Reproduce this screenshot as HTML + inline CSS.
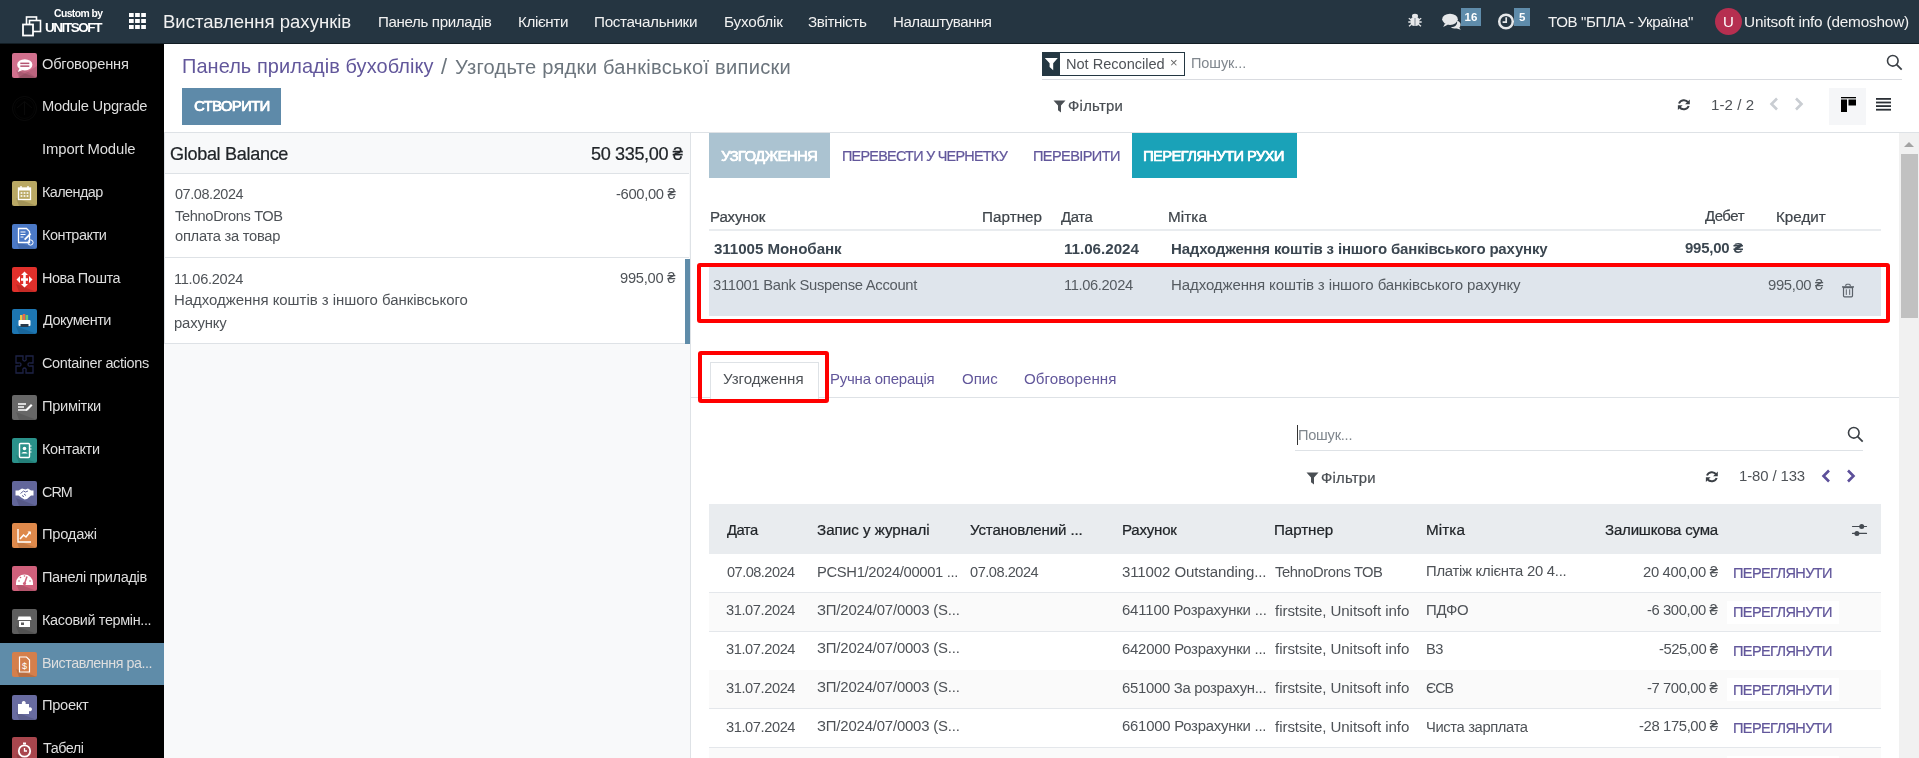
<!DOCTYPE html>
<html><head><meta charset="utf-8"><title>Odoo</title>
<style>
html,body{margin:0;padding:0;}
body{width:1919px;height:758px;overflow:hidden;position:relative;background:#fff;font-family:"Liberation Sans",sans-serif;}
.r{position:absolute;box-sizing:content-box;}
.t{position:absolute;line-height:1;white-space:pre;will-change:transform;}
svg.r{overflow:visible}
</style></head><body>
<div class="r" style="left:0px;top:0px;width:1919px;height:44px;background:#253541;"></div>
<div class="r" style="left:0px;top:43px;width:1919px;height:1px;background:#121d24;"></div>
<svg class="r" style="left:22px;top:16px" width="20" height="21" viewBox="0 0 20 21"><rect x="4.5" y="1" width="10" height="10" fill="none" stroke="#fff" stroke-width="1.6"/><rect x="7.5" y="4.5" width="11" height="11" fill="#253541" stroke="#fff" stroke-width="1.6"/><rect x="1" y="8.5" width="10" height="11" fill="#253541" stroke="#fff" stroke-width="1.8"/></svg>
<svg class="r" style="left:129.3px;top:13px" width="17" height="17" viewBox="0 0 17 17"><rect x="0.0" y="0" width="4.7" height="4" fill="#fff"/><rect x="6.1" y="0" width="4.7" height="4" fill="#fff"/><rect x="12.2" y="0" width="4.7" height="4" fill="#fff"/><rect x="0.0" y="6" width="4.7" height="4" fill="#fff"/><rect x="6.1" y="6" width="4.7" height="4" fill="#fff"/><rect x="12.2" y="6" width="4.7" height="4" fill="#fff"/><rect x="0.0" y="12" width="4.7" height="4" fill="#fff"/><rect x="6.1" y="12" width="4.7" height="4" fill="#fff"/><rect x="12.2" y="12" width="4.7" height="4" fill="#fff"/></svg>
<svg class="r" style="left:1407px;top:12px" width="16" height="16" viewBox="0 0 16 16"><g fill="#e6e8ea"><ellipse cx="8" cy="4" rx="3" ry="2.2"/><rect x="3.5" y="5" width="9" height="9" rx="4"/><path d="M1.8 6.2l2.5 1.8M14.2 6.2l-2.5 1.8M1.3 10h2.5M14.7 10h-2.5M2 14.3l2.5-2M14 14.3l-2.5-2" stroke="#e6e8ea" stroke-width="1.4"/></g><rect x="7.3" y="6" width="1.4" height="8" fill="#9aa3aa"/></svg>
<svg class="r" style="left:1442px;top:13px" width="20" height="17" viewBox="0 0 20 17"><ellipse cx="8" cy="6.3" rx="7.8" ry="5.6" fill="#e6e8ea"/><path d="M3 10.5l-1.8 3.5 5-2.5z" fill="#e6e8ea"/><path d="M15 7.5c3 1 4 3 3.5 5 -.3 1.2-1 2-1.2 2.3l1.5 2-4-1.3c-2 .3-4 0-6-1.3 4 .2 7-2 6.2-6.7z" fill="#e6e8ea"/></svg>
<div class="r" style="left:1461px;top:7.5px;width:20px;height:18.2px;background:#5f8cab;"></div>
<svg class="r" style="left:1497px;top:13px" width="18" height="18" viewBox="0 0 18 18"><circle cx="9" cy="8.5" r="6.8" fill="none" stroke="#e6e8ea" stroke-width="2.5"/><path d="M9.2 4.3v4.9h-3.6" fill="none" stroke="#e6e8ea" stroke-width="1.7"/></svg>
<div class="r" style="left:1513.5px;top:7.5px;width:16.5px;height:18.2px;background:#5f8cab;"></div>
<div class="t" style="left:1461px;top:11.5px;width:20px;text-align:center;font-size:11.5px;font-weight:700;color:#fff">16</div>
<div class="t" style="left:1513.5px;top:11.5px;width:16.5px;text-align:center;font-size:11.5px;font-weight:700;color:#fff">5</div>
<div class="r" style="left:1714.8px;top:7.8px;width:27px;height:27px;border-radius:50%;background:#b62f50"></div>
<div class="t" style="left:1714.8px;top:13.5px;width:27px;text-align:center;font-size:15px;color:#fff">U</div>
<div class="r" style="left:0px;top:44px;width:164px;height:714px;background:#000;"></div>
<div class="r" style="left:0px;top:643.2px;width:164px;height:41.799999999999955px;background:#5f8ca9;"></div>
<svg class="r" style="left:12px;top:52.8px" width="25" height="25" viewBox="0 0 25 25"><rect x="0" y="0" width="25" height="25" rx="2" fill="#d1708d"/><path d="M6 20L20 6 25 11V23a2 2 0 0 1-2 2H11z" fill="#000" opacity="0.0"/><path d="M4 17L25 25H7z" fill="#000" opacity="0.12"/><path d="M5.5 25L25 13V23a2 2 0 0 1-2 2z" fill="#000" opacity="0.1"/><path d="M6 18l4-3 15 10H8z" fill="#000" opacity="0.08"/><ellipse cx="12.8" cy="11.8" rx="7.6" ry="5.6" fill="#fff"/><path d="M7.5 15.5l-1.8 3.6 5-2.2z" fill="#fff"/><rect x="8.3" y="9.6" width="9" height="1.5" fill="#b55572"/><rect x="8.3" y="12.4" width="9" height="1.5" fill="#b55572"/></svg>
<svg class="r" style="left:12px;top:95.58px" width="25" height="25" viewBox="0 0 25 25"><circle cx="12.5" cy="12.5" r="12" fill="none" stroke="#0d0d0d" stroke-width="0.8"/><circle cx="12.5" cy="12.5" r="10" fill="none" stroke="#0a0a0a" stroke-width="0.6"/><path d="M5 12l7.5-6.5 7.5 6.5M12.5 6v13" fill="none" stroke="#0d0d0d" stroke-width="0.8"/></svg>
<svg class="r" style="left:12px;top:138.36px" width="25" height="25" viewBox="0 0 25 25"></svg>
<svg class="r" style="left:12px;top:181.14px" width="25" height="25" viewBox="0 0 25 25"><rect x="0" y="0" width="25" height="25" rx="2" fill="#b9a864"/><path d="M6 20L20 6 25 11V23a2 2 0 0 1-2 2H11z" fill="#000" opacity="0.0"/><path d="M4 17L25 25H7z" fill="#000" opacity="0.12"/><rect x="6.5" y="7" width="12" height="11.5" fill="none" stroke="#fff" stroke-width="1.3"/><rect x="6.5" y="7" width="12" height="2.5" fill="#fff"/><rect x="8.3" y="5" width="1.4" height="3" fill="#fff"/><rect x="15.3" y="5" width="1.4" height="3" fill="#fff"/><g fill="#fff"><rect x="8.6" y="11.2" width="1.8" height="1.6"/><rect x="11.6" y="11.2" width="1.8" height="1.6"/><rect x="14.6" y="11.2" width="1.8" height="1.6"/><rect x="8.6" y="14.2" width="1.8" height="1.6"/><rect x="11.6" y="14.2" width="1.8" height="1.6"/><rect x="14.6" y="14.2" width="1.8" height="1.6"/></g></svg>
<svg class="r" style="left:12px;top:223.92000000000002px" width="25" height="25" viewBox="0 0 25 25"><rect x="0" y="0" width="25" height="25" rx="2" fill="#4b79c6"/><path d="M6 20L20 6 25 11V23a2 2 0 0 1-2 2H11z" fill="#000" opacity="0.0"/><path d="M4 17L25 25H7z" fill="#000" opacity="0.12"/><path d="M6.5 4.5h8l3 3v11h-11z" fill="none" stroke="#fff" stroke-width="1.3"/><path d="M8.5 8h5M8.5 10.5h5M8.5 13h3" stroke="#fff" stroke-width="1"/><path d="M12 15l6-6 1.3 1.3-6 6z" fill="#fff"/><circle cx="18.5" cy="18.5" r="2.6" fill="none" stroke="#fff" stroke-width="1"/></svg>
<svg class="r" style="left:12px;top:266.7px" width="25" height="25" viewBox="0 0 25 25"><rect x="0" y="0" width="25" height="25" rx="2" fill="#e0302b"/><path d="M6 20L20 6 25 11V23a2 2 0 0 1-2 2H11z" fill="#000" opacity="0.0"/><path d="M4 17L25 25H7z" fill="#000" opacity="0.12"/><path d="M12.5 4.5l3.5 3.5h-2.2v3.3h2.2v2.4h-2.2V17h2.2l-3.5 3.5-3.5-3.5h2.2v-3.3H9v-2.4h2.2V8H9z" fill="#fff"/><path d="M4.5 12.5l3.5-3.5v7z M20.5 12.5l-3.5-3.5v7z" fill="#fff"/></svg>
<svg class="r" style="left:12px;top:309.48px" width="25" height="25" viewBox="0 0 25 25"><rect x="0" y="0" width="25" height="25" rx="2" fill="#1d76b2"/><path d="M6 20L20 6 25 11V23a2 2 0 0 1-2 2H11z" fill="#000" opacity="0.0"/><path d="M4 17L25 25H7z" fill="#000" opacity="0.12"/><rect x="8" y="6" width="2.5" height="6" fill="#e8c84a"/><rect x="10.8" y="5" width="2.5" height="7" fill="#e86a4a"/><rect x="13.6" y="6" width="2.5" height="6" fill="#6ac86a"/><rect x="6.5" y="11" width="12" height="6" rx="1" fill="#fff"/><rect x="8.5" y="15" width="8" height="3" fill="#2a3a4a"/></svg>
<svg class="r" style="left:12px;top:352.26000000000005px" width="25" height="25" viewBox="0 0 25 25"><g fill="none" stroke="#1e2347" stroke-width="1.3"><path d="M4 4h7v2.5a1.7 1.7 0 1 0 3 0V4h7v7h-2.5a1.7 1.7 0 1 0 0 3H21v7h-7v-2.5a1.7 1.7 0 1 0-3 0V21H4v-7h2.5a1.7 1.7 0 1 0 0-3H4z"/></g></svg>
<svg class="r" style="left:12px;top:395.04px" width="25" height="25" viewBox="0 0 25 25"><rect x="0" y="0" width="25" height="25" rx="2" fill="#676767"/><path d="M6 20L20 6 25 11V23a2 2 0 0 1-2 2H11z" fill="#000" opacity="0.0"/><path d="M4 17L25 25H7z" fill="#000" opacity="0.12"/><path d="M6 9h8M6 12h6M6 15h9" stroke="#fff" stroke-width="1.4"/><path d="M14 14l5-5 1.5 1.5-5 5-2 .5z" fill="#fff"/></svg>
<svg class="r" style="left:12px;top:437.82px" width="25" height="25" viewBox="0 0 25 25"><rect x="0" y="0" width="25" height="25" rx="2" fill="#2a918a"/><path d="M6 20L20 6 25 11V23a2 2 0 0 1-2 2H11z" fill="#000" opacity="0.0"/><path d="M4 17L25 25H7z" fill="#000" opacity="0.12"/><rect x="7.5" y="5.5" width="10" height="14" rx="1" fill="none" stroke="#fff" stroke-width="1.4"/><circle cx="12.5" cy="10.5" r="1.8" fill="#fff"/><path d="M9.5 15.5c0-2 6-2 6 0z" fill="#fff"/><path d="M18 8h1.5M18 11h1.5M18 14h1.5" stroke="#fff" stroke-width="1"/></svg>
<svg class="r" style="left:12px;top:480.6px" width="25" height="25" viewBox="0 0 25 25"><rect x="0" y="0" width="25" height="25" rx="2" fill="#62669a"/><path d="M6 20L20 6 25 11V23a2 2 0 0 1-2 2H11z" fill="#000" opacity="0.0"/><path d="M4 17L25 25H7z" fill="#000" opacity="0.12"/><path d="M3.5 9.5h3l3.5-2 3.5 1 2.5-1 3 2h2.5v5h-2.5l-4 3.5-2.5.5-2.5-1.5-3.5-2.5h-3z" fill="#fff"/><path d="M8.5 12.5l3-2.5 2 1 2.5-1M10 14.5l2 1.2M12 13l2 1.5" fill="none" stroke="#62669a" stroke-width="1"/></svg>
<svg class="r" style="left:12px;top:523.38px" width="25" height="25" viewBox="0 0 25 25"><rect x="0" y="0" width="25" height="25" rx="2" fill="#de894b"/><path d="M6 20L20 6 25 11V23a2 2 0 0 1-2 2H11z" fill="#000" opacity="0.0"/><path d="M4 17L25 25H7z" fill="#000" opacity="0.12"/><path d="M6 6v13h13" fill="none" stroke="#fff" stroke-width="1.4"/><path d="M8 16l3.5-4 2.5 2 4-5" fill="none" stroke="#fff" stroke-width="1.6"/><path d="M15.5 8.5h3.3v3.3z" fill="#fff"/></svg>
<svg class="r" style="left:12px;top:566.16px" width="25" height="25" viewBox="0 0 25 25"><rect x="0" y="0" width="25" height="25" rx="2" fill="#cf607b"/><path d="M6 20L20 6 25 11V23a2 2 0 0 1-2 2H11z" fill="#000" opacity="0.0"/><path d="M4 17L25 25H7z" fill="#000" opacity="0.12"/><path d="M4 17a8.5 8.5 0 0 1 17 0v2H4z" fill="#fff"/><path d="M12.5 17.5l2.5-7" stroke="#cf607b" stroke-width="1.5"/><circle cx="12.5" cy="17.5" r="1.6" fill="#cf607b"/><g fill="#cf607b"><circle cx="7" cy="15" r=".8"/><circle cx="8.5" cy="11.5" r=".8"/><circle cx="12.5" cy="10" r=".8"/><circle cx="18" cy="15" r=".8"/></g></svg>
<svg class="r" style="left:12px;top:608.9399999999999px" width="25" height="25" viewBox="0 0 25 25"><rect x="0" y="0" width="25" height="25" rx="2" fill="#5e5e5e"/><path d="M6 20L20 6 25 11V23a2 2 0 0 1-2 2H11z" fill="#000" opacity="0.0"/><path d="M4 17L25 25H7z" fill="#000" opacity="0.12"/><path d="M6.5 7.5h12l1 3.5h-14z" fill="#fff"/><rect x="7" y="12" width="11" height="6" fill="#fff"/><rect x="9" y="13.5" width="3" height="2.5" fill="#5e5e5e"/></svg>
<svg class="r" style="left:12px;top:651.72px" width="25" height="25" viewBox="0 0 25 25"><rect x="0" y="0" width="25" height="25" rx="2" fill="#d47f4c"/><path d="M6 20L20 6 25 11V23a2 2 0 0 1-2 2H11z" fill="#000" opacity="0.0"/><path d="M4 17L25 25H7z" fill="#000" opacity="0.12"/><path d="M7.5 5h7l3 3v12h-10z" fill="none" stroke="#fff" stroke-width="1.2"/><text x="12.5" y="17" font-size="9" fill="#fff" text-anchor="middle" font-family="Liberation Sans">$</text></svg>
<svg class="r" style="left:12px;top:694.5px" width="25" height="25" viewBox="0 0 25 25"><rect x="0" y="0" width="25" height="25" rx="2" fill="#686ba0"/><path d="M6 20L20 6 25 11V23a2 2 0 0 1-2 2H11z" fill="#000" opacity="0.0"/><path d="M4 17L25 25H7z" fill="#000" opacity="0.12"/><path d="M6 9h4a2 2 0 1 1 3.5 0H17v3.5a2 2 0 1 1 0 3.5V19H6z" fill="#fff"/></svg>
<svg class="r" style="left:12px;top:737.28px" width="25" height="25" viewBox="0 0 25 25"><rect x="0" y="0" width="25" height="25" rx="2" fill="#a8464d"/><path d="M6 20L20 6 25 11V23a2 2 0 0 1-2 2H11z" fill="#000" opacity="0.0"/><path d="M4 17L25 25H7z" fill="#000" opacity="0.12"/><circle cx="12.5" cy="14" r="5.7" fill="none" stroke="#fff" stroke-width="1.8"/><rect x="11" y="5.5" width="3" height="2" fill="#fff"/><path d="M12.5 11v3h2.5" stroke="#fff" stroke-width="1.3" fill="none"/></svg>
<div class="r" style="left:164px;top:44px;width:1755px;height:88px;background:#fff;"></div>
<div class="r" style="left:164px;top:132px;width:1755px;height:1px;background:#dee2e6;"></div>
<div class="r" style="left:182px;top:88px;width:99px;height:36.7px;background:#5e8aa9;"></div>
<div class="r" style="left:1042px;top:52px;width:141px;height:22px;border:1px solid #243742;background:#fff"></div>
<div class="r" style="left:1042px;top:52px;width:18px;height:24px;background:#243742;"></div>
<svg class="r" style="left:1044px;top:56px" width="14" height="17" viewBox="0 0 14 17"><path d="M0.8 1.9h13l-4.6 5.3v7.1l-3.6-3.2V7.2z" fill="#fff"/></svg>
<div class="t" style="left:1170px;top:56px;font-size:13px;color:#666">×</div>
<div class="r" style="left:1042px;top:79px;width:860px;height:1px;background:#d9dbe0;"></div>
<svg class="r" style="left:1886px;top:54px" width="17" height="17" viewBox="0 0 17 17"><circle cx="6.8" cy="6.8" r="5.3" fill="none" stroke="#3b4046" stroke-width="1.6"/><path d="M10.7 10.7l5 5" stroke="#3b4046" stroke-width="1.8"/></svg>
<svg class="r" style="left:1053px;top:100px" width="13" height="13" viewBox="0 0 13 13"><path d="M0.5 0.5h12l-4.5 5v7l-3-2.2v-4.8z" fill="#4a4f54"/></svg>
<svg class="r" style="left:1676.5px;top:97.5px" width="14" height="14" viewBox="0 0 14 14"><path d="M11.2 4.3A5.3 5.3 0 0 0 2 5.5" fill="none" stroke="#3b4046" stroke-width="2"/><path d="M12.8 1.5v4.7H8.1z" fill="#3b4046"/><path d="M2.5 9.2A5.3 5.3 0 0 0 11.7 8" fill="none" stroke="#3b4046" stroke-width="2"/><path d="M0.9 12v-4.7h4.7z" fill="#3b4046"/></svg>
<svg class="r" style="left:1769px;top:97px" width="10" height="14" viewBox="0 0 10 14"><path d="M8 1.5L2.5 7 8 12.5" fill="none" stroke="#c9cdd2" stroke-width="2.6"/></svg>
<svg class="r" style="left:1793.5px;top:97px" width="10" height="14" viewBox="0 0 10 14"><path d="M2 1.5L7.5 7 2 12.5" fill="none" stroke="#c9cdd2" stroke-width="2.6"/></svg>
<div class="r" style="left:1829px;top:88px;width:37px;height:36.7px;background:#f5f6f8;"></div>
<svg class="r" style="left:1840.6px;top:97px" width="15" height="15" viewBox="0 0 15 15"><rect x="0" y="0" width="15" height="1.3" fill="#000"/><rect x="0" y="2.5" width="6" height="12.5" fill="#000"/><rect x="7.5" y="2.5" width="7.5" height="6" fill="#000"/></svg>
<svg class="r" style="left:1876px;top:98px" width="15" height="13" viewBox="0 0 15 13"><g fill="#2b3036"><rect x="0" y="0" width="15" height="1.8"/><rect x="0" y="3.6" width="15" height="1.8"/><rect x="0" y="7.2" width="15" height="1.8"/><rect x="0" y="10.8" width="15" height="1.8"/></g></svg>
<div class="r" style="left:164px;top:133px;width:526px;height:625px;background:#f8f9fa;"></div>
<div class="r" style="left:164px;top:133px;width:525px;height:40px;background:#f8f9fa;"></div>
<div class="r" style="left:164px;top:173px;width:525px;height:1px;background:#dee2e6;"></div>
<div class="r" style="left:164px;top:174px;width:525px;height:83px;background:#fff;"></div>
<div class="r" style="left:164px;top:257px;width:525px;height:1px;background:#dee2e6;"></div>
<div class="r" style="left:164px;top:258px;width:525px;height:85px;background:#fff;"></div>
<div class="r" style="left:164px;top:343px;width:525px;height:1px;background:#dee2e6;"></div>
<div class="r" style="left:164px;top:133px;width:1px;height:211px;background:#dee2e6;"></div>
<div class="r" style="left:685px;top:258.5px;width:5px;height:85.0px;background:#5f8ca9;"></div>
<div class="r" style="left:690px;top:133px;width:1px;height:625px;background:#dee2e6;"></div>
<div class="r" style="left:691px;top:133px;width:1208px;height:625px;background:#fff;"></div>
<div class="r" style="left:709px;top:133px;width:121px;height:44.69999999999999px;background:#abc3d1;"></div>
<div class="r" style="left:1132px;top:133px;width:165px;height:44.69999999999999px;background:#1aa2b8;"></div>
<div class="r" style="left:709px;top:229px;width:1172px;height:2px;background:#e9ecef;"></div>
<div class="r" style="left:709px;top:267px;width:1172px;height:48.5px;background:#dfe5ec;"></div>
<div class="r" style="left:696.5px;top:262.5px;width:1185.8px;height:52.5px;border:4px solid #ff0000;border-radius:3px"></div>
<svg class="r" style="left:1842px;top:284px" width="12" height="14" viewBox="0 0 12 14"><path d="M3.8 2.3V1.3a1 1 0 0 1 1-1h2.4a1 1 0 0 1 1 1v1" fill="none" stroke="#5a6169" stroke-width="1.1"/><rect x="0" y="2.2" width="12" height="1.4" fill="#5a6169"/><path d="M1.5 3.6h9v8.2a1 1 0 0 1-1 1h-7a1 1 0 0 1-1-1z" fill="none" stroke="#5a6169" stroke-width="1.2"/><path d="M4.3 5.3v5.6M7.7 5.3v5.6" stroke="#5a6169" stroke-width="1"/></svg>
<div class="r" style="left:691px;top:397px;width:1208px;height:1px;background:#dee2e6;"></div>
<div class="r" style="left:709.5px;top:361.6px;width:107.5px;height:36.4px;border:1px solid #dee2e6;border-bottom:none;background:#fff"></div>
<div class="r" style="left:698px;top:350.6px;width:123px;height:44.3px;border:4px solid #ff0000;border-radius:3px"></div>
<div class="r" style="left:1297px;top:425px;width:1px;height:20px;background:#333;"></div>
<div class="r" style="left:1295px;top:450px;width:568px;height:1px;background:#dee2e6;"></div>
<svg class="r" style="left:1847px;top:426px" width="17" height="17" viewBox="0 0 17 17"><circle cx="6.8" cy="6.8" r="5.3" fill="none" stroke="#3b4046" stroke-width="1.6"/><path d="M10.7 10.7l5 5" stroke="#3b4046" stroke-width="1.8"/></svg>
<svg class="r" style="left:1305.5px;top:472px" width="13" height="13" viewBox="0 0 13 13"><path d="M0.5 0.5h12l-4.5 5v7l-3-2.2v-4.8z" fill="#4a4f54"/></svg>
<svg class="r" style="left:1704.5px;top:469.5px" width="14" height="14" viewBox="0 0 14 14"><path d="M11.2 4.3A5.3 5.3 0 0 0 2 5.5" fill="none" stroke="#3b4046" stroke-width="2"/><path d="M12.8 1.5v4.7H8.1z" fill="#3b4046"/><path d="M2.5 9.2A5.3 5.3 0 0 0 11.7 8" fill="none" stroke="#3b4046" stroke-width="2"/><path d="M0.9 12v-4.7h4.7z" fill="#3b4046"/></svg>
<svg class="r" style="left:1821px;top:469px" width="10" height="14" viewBox="0 0 10 14"><path d="M8 1.5L2.5 7 8 12.5" fill="none" stroke="#5c4f9a" stroke-width="2.6"/></svg>
<svg class="r" style="left:1845.5px;top:469px" width="10" height="14" viewBox="0 0 10 14"><path d="M2 1.5L7.5 7 2 12.5" fill="none" stroke="#5c4f9a" stroke-width="2.6"/></svg>
<div class="r" style="left:709px;top:504px;width:1172px;height:50px;background:#e9ecef;"></div>
<svg class="r" style="left:1852px;top:523px" width="15" height="15" viewBox="0 0 15 15"><g stroke="#454b52" stroke-width="1.2" stroke-linecap="round"><path d="M0.5 3.5h14M0.5 10.4h14"/></g><circle cx="9.7" cy="3.5" r="2.5" fill="#454b52"/><circle cx="4.9" cy="10.4" r="2.5" fill="#454b52"/></svg>
<div class="r" style="left:709px;top:592.2px;width:1172px;height:1.0px;background:#e4e7eb;"></div>
<div class="r" style="left:709px;top:592.72px;width:1172px;height:38.72000000000003px;background:#fafafa;"></div>
<div class="r" style="left:1727px;top:600.72px;width:111.5px;height:23.0px;background:#fff;"></div>
<div class="r" style="left:709px;top:630.9200000000001px;width:1172px;height:1.0px;background:#e4e7eb;"></div>
<div class="r" style="left:709px;top:669.6400000000001px;width:1172px;height:1.0px;background:#e4e7eb;"></div>
<div class="r" style="left:709px;top:670.16px;width:1172px;height:38.72000000000003px;background:#fafafa;"></div>
<div class="r" style="left:1727px;top:678.16px;width:111.5px;height:23.0px;background:#fff;"></div>
<div class="r" style="left:709px;top:708.36px;width:1172px;height:1.0px;background:#e4e7eb;"></div>
<div class="r" style="left:709px;top:747.08px;width:1172px;height:1.0px;background:#e4e7eb;"></div>
<div class="r" style="left:709px;top:747.6px;width:1172px;height:38.72000000000003px;background:#fafafa;"></div>
<div class="r" style="left:1727px;top:755.6px;width:111.5px;height:23.0px;background:#fff;"></div>
<div class="r" style="left:709px;top:785.8000000000001px;width:1172px;height:1.0px;background:#e4e7eb;"></div>
<div class="r" style="left:1899px;top:133px;width:20px;height:625px;background:#f1f1f1;"></div>
<svg class="r" style="left:1903px;top:141px" width="12" height="7" viewBox="0 0 12 7"><path d="M1 6L6 1l5 5z" fill="#a3a3a3"/></svg>
<div class="r" style="left:1901px;top:154px;width:17px;height:163.5px;background:#c1c1c1;"></div>
<div class="t" style="left:163.00px;top:12.98px;font-size:18.54px;letter-spacing:0.0px;color:#f2f2f2;">Виставлення рахунків</div>
<div class="t" style="left:378.40px;top:14.19px;font-size:15.12px;letter-spacing:-0.368px;color:#f2f2f2;">Панель приладів</div>
<div class="t" style="left:518.40px;top:14.15px;font-size:15.2px;letter-spacing:-0.383px;color:#f2f2f2;">Клієнти</div>
<div class="t" style="left:594.00px;top:14.12px;font-size:15.25px;letter-spacing:-0.333px;color:#f2f2f2;">Постачальники</div>
<div class="t" style="left:724.00px;top:14.12px;font-size:15.26px;letter-spacing:-0.186px;color:#f2f2f2;">Бухоблік</div>
<div class="t" style="left:808.00px;top:14.16px;font-size:15.19px;letter-spacing:-0.375px;color:#f2f2f2;">Звітність</div>
<div class="t" style="left:892.80px;top:14.22px;font-size:15.06px;letter-spacing:-0.455px;color:#f2f2f2;">Налаштування</div>
<div class="t" style="left:1548.30px;top:13.75px;font-size:15.1px;letter-spacing:-0.384px;color:#f2f2f2;">ТОВ &quot;БПЛА - Україна&quot;</div>
<div class="t" style="left:1744.40px;top:13.64px;font-size:15.33px;letter-spacing:-0.191px;color:#f2f2f2;">Unitsoft info (demoshow)</div>
<div class="t" style="left:42.00px;top:56.67px;font-size:14.65px;letter-spacing:-0.22px;color:#dedede;">Обговорення</div>
<div class="t" style="left:42.00px;top:99.42px;font-size:14.71px;letter-spacing:-0.246px;color:#dedede;">Module Upgrade</div>
<div class="t" style="left:42.00px;top:142.13px;font-size:14.85px;letter-spacing:-0.108px;color:#dedede;">Import Module</div>
<div class="t" style="left:42.00px;top:185.12px;font-size:14.43px;letter-spacing:-0.586px;color:#dedede;">Календар</div>
<div class="t" style="left:42.00px;top:227.87px;font-size:14.5px;letter-spacing:-0.45px;color:#dedede;">Контракти</div>
<div class="t" style="left:42.00px;top:270.69px;font-size:14.43px;letter-spacing:-0.422px;color:#dedede;">Нова Пошта</div>
<div class="t" style="left:43.00px;top:313.43px;font-size:14.5px;letter-spacing:-0.5px;color:#dedede;">Документи</div>
<div class="t" style="left:42.00px;top:356.22px;font-size:14.49px;letter-spacing:-0.344px;color:#dedede;">Container actions</div>
<div class="t" style="left:42.00px;top:398.91px;font-size:14.67px;letter-spacing:-0.329px;color:#dedede;">Примітки</div>
<div class="t" style="left:42.00px;top:441.78px;font-size:14.47px;letter-spacing:-0.314px;color:#dedede;">Контакти</div>
<div class="t" style="left:42.00px;top:484.59px;font-size:14.42px;letter-spacing:-1.0px;color:#dedede;">CRM</div>
<div class="t" style="left:42.00px;top:527.22px;font-size:14.72px;letter-spacing:-0.267px;color:#dedede;">Продажі</div>
<div class="t" style="left:42.00px;top:570.10px;font-size:14.53px;letter-spacing:-0.329px;color:#dedede;">Панелі приладів</div>
<div class="t" style="left:42.00px;top:612.92px;font-size:14.44px;letter-spacing:-0.356px;color:#dedede;">Касовий термін...</div>
<div class="t" style="left:42.00px;top:655.77px;font-size:14.31px;letter-spacing:-0.469px;color:#dedede;">Виставлення ра...</div>
<div class="t" style="left:42.00px;top:698.36px;font-size:14.68px;letter-spacing:-0.3px;color:#dedede;">Проект</div>
<div class="t" style="left:43.00px;top:741.29px;font-size:14.38px;letter-spacing:-0.48px;color:#dedede;">Табелі</div>
<div class="t" style="left:181.90px;top:57.13px;font-size:19.93px;letter-spacing:0.083px;color:#62579b;">Панель приладів бухобліку</div>
<div class="t" style="left:441.20px;top:55.60px;font-size:21.99px;letter-spacing:0px;color:#6c757d;">/</div>
<div class="t" style="left:455.00px;top:57.03px;font-size:20.13px;letter-spacing:0.261px;color:#6c757d;">Узгодьте рядки банківської виписки</div>
<div class="t" style="left:193.60px;top:98.85px;font-size:14.7px;letter-spacing:-0.514px;color:#ffffff;-webkit-text-stroke:0.5px #ffffff;text-shadow:0.4px 0 0 #ffffff;">СТВОРИТИ</div>
<div class="t" style="left:1065.50px;top:56.91px;font-size:14.59px;letter-spacing:-0.015px;color:#4e5257;">Not Reconciled</div>
<div class="t" style="left:1190.60px;top:56.33px;font-size:14.53px;letter-spacing:-0.086px;color:#80878e;">Пошук...</div>
<div class="t" style="left:1067.70px;top:98.75px;font-size:14.89px;letter-spacing:0.267px;color:#4a4f54;-webkit-text-stroke:0.22px #4a4f54;">Фільтри</div>
<div class="t" style="left:1711.00px;top:97.07px;font-size:15.06px;letter-spacing:0.067px;color:#4e5257;">1-2 / 2</div>
<div class="t" style="left:170.30px;top:144.87px;font-size:18.07px;letter-spacing:-0.315px;color:#212529;-webkit-text-stroke:0.22px #212529;">Global Balance</div>
<div class="t" style="left:591.40px;top:144.97px;font-size:18.07px;letter-spacing:-0.36px;color:#212529;-webkit-text-stroke:0.22px #212529;">50 335,00 ₴</div>
<div class="t" style="left:174.70px;top:186.78px;font-size:14.45px;letter-spacing:-0.411px;color:#4e5257;">07.08.2024</div>
<div class="t" style="left:174.70px;top:208.59px;font-size:14.61px;letter-spacing:-0.331px;color:#4e5257;">TehnoDrons ТОВ</div>
<div class="t" style="left:174.70px;top:229.46px;font-size:14.69px;letter-spacing:-0.257px;color:#4e5257;">оплата за товар</div>
<div class="t" style="left:616.00px;top:186.72px;font-size:14.75px;letter-spacing:-0.325px;color:#4e5257;">-600,00 ₴</div>
<div class="t" style="left:173.70px;top:271.50px;font-size:14.61px;letter-spacing:-0.3px;color:#4e5257;">11.06.2024</div>
<div class="t" style="left:173.70px;top:293.22px;font-size:14.96px;letter-spacing:-0.026px;color:#4e5257;">Надходження коштів з іншого банківського</div>
<div class="t" style="left:173.70px;top:316.36px;font-size:14.89px;letter-spacing:-0.167px;color:#4e5257;">рахунку</div>
<div class="t" style="left:620.00px;top:271.45px;font-size:14.7px;letter-spacing:-0.257px;color:#4e5257;">995,00 ₴</div>
<div class="t" style="left:721.30px;top:148.94px;font-size:14.73px;letter-spacing:-0.533px;color:#ffffff;-webkit-text-stroke:0.5px #ffffff;text-shadow:0.4px 0 0 #ffffff;">УЗГОДЖЕННЯ</div>
<div class="t" style="left:842.00px;top:149.10px;font-size:14.4px;letter-spacing:-0.737px;color:#62579b;-webkit-text-stroke:0.22px #62579b;">ПЕРЕВЕСТИ У ЧЕРНЕТКУ</div>
<div class="t" style="left:1032.80px;top:149.02px;font-size:14.57px;letter-spacing:-0.611px;color:#62579b;-webkit-text-stroke:0.22px #62579b;">ПЕРЕВІРИТИ</div>
<div class="t" style="left:1143.30px;top:148.99px;font-size:14.63px;letter-spacing:-0.54px;color:#ffffff;-webkit-text-stroke:0.5px #ffffff;text-shadow:0.4px 0 0 #ffffff;">ПЕРЕГЛЯНУТИ РУХИ</div>
<div class="t" style="left:709.80px;top:209.16px;font-size:15.09px;letter-spacing:-0.167px;color:#3f454b;-webkit-text-stroke:0.22px #3f454b;">Рахунок</div>
<div class="t" style="left:982.00px;top:209.09px;font-size:15.22px;letter-spacing:0.033px;color:#3f454b;-webkit-text-stroke:0.22px #3f454b;">Партнер</div>
<div class="t" style="left:1061.00px;top:209.78px;font-size:14.84px;letter-spacing:-0.333px;color:#3f454b;-webkit-text-stroke:0.22px #3f454b;">Дата</div>
<div class="t" style="left:1167.50px;top:209.07px;font-size:15.25px;letter-spacing:0.075px;color:#3f454b;-webkit-text-stroke:0.22px #3f454b;">Мітка</div>
<div class="t" style="left:1704.80px;top:209.23px;font-size:14.94px;letter-spacing:-0.45px;color:#3f454b;-webkit-text-stroke:0.22px #3f454b;">Дебет</div>
<div class="t" style="left:1775.80px;top:209.10px;font-size:15.2px;letter-spacing:0.0px;color:#3f454b;-webkit-text-stroke:0.22px #3f454b;">Кредит</div>
<div class="t" style="left:713.90px;top:241.03px;font-size:15.15px;letter-spacing:-0.071px;color:#3b4650;font-weight:700;">311005 Монобанк</div>
<div class="t" style="left:1064.00px;top:241.01px;font-size:15.18px;letter-spacing:-0.022px;color:#3b4650;font-weight:700;">11.06.2024</div>
<div class="t" style="left:1170.60px;top:241.09px;font-size:15.01px;letter-spacing:-0.17px;color:#3b4650;font-weight:700;">Надходження коштів з іншого банківського рахунку</div>
<div class="t" style="left:1685.00px;top:241.12px;font-size:14.95px;letter-spacing:-0.214px;color:#3b4650;font-weight:700;">995,00 ₴</div>
<div class="t" style="left:712.90px;top:277.62px;font-size:14.77px;letter-spacing:-0.296px;color:#555b61;">311001 Bank Suspense Account</div>
<div class="t" style="left:1064.00px;top:277.66px;font-size:14.68px;letter-spacing:-0.356px;color:#555b61;">11.06.2024</div>
<div class="t" style="left:1170.60px;top:276.98px;font-size:15.04px;letter-spacing:-0.113px;color:#555b61;">Надходження коштів з іншого банківського рахунку</div>
<div class="t" style="left:1768.20px;top:277.58px;font-size:14.83px;letter-spacing:-0.357px;color:#555b61;">995,00 ₴</div>
<div class="t" style="left:723.00px;top:371.06px;font-size:15.09px;letter-spacing:-0.044px;color:#4e5257;">Узгодження</div>
<div class="t" style="left:830.40px;top:371.11px;font-size:14.98px;letter-spacing:-0.215px;color:#62579b;">Ручна операція</div>
<div class="t" style="left:962.20px;top:371.09px;font-size:15.02px;letter-spacing:0.0px;color:#62579b;">Опис</div>
<div class="t" style="left:1024.40px;top:371.03px;font-size:15.15px;letter-spacing:0.03px;color:#62579b;">Обговорення</div>
<div class="t" style="left:1298.00px;top:427.60px;font-size:14.6px;letter-spacing:-0.243px;color:#80878e;">Пошук...</div>
<div class="t" style="left:1320.60px;top:470.67px;font-size:14.87px;letter-spacing:0.233px;color:#4a4f54;-webkit-text-stroke:0.22px #4a4f54;">Фільтри</div>
<div class="t" style="left:1738.60px;top:469.44px;font-size:14.91px;letter-spacing:-0.111px;color:#4e5257;">1-80 / 133</div>
<div class="t" style="left:727.40px;top:522.83px;font-size:14.74px;letter-spacing:-0.5px;color:#212529;-webkit-text-stroke:0.22px #212529;">Дата</div>
<div class="t" style="left:816.70px;top:522.13px;font-size:15.14px;letter-spacing:-0.007px;color:#212529;-webkit-text-stroke:0.22px #212529;">Запис у журналі</div>
<div class="t" style="left:970.30px;top:522.18px;font-size:15.05px;letter-spacing:-0.113px;color:#212529;-webkit-text-stroke:0.22px #212529;">Установлений ...</div>
<div class="t" style="left:1121.50px;top:522.17px;font-size:15.06px;letter-spacing:-0.217px;color:#212529;-webkit-text-stroke:0.22px #212529;">Рахунок</div>
<div class="t" style="left:1273.90px;top:522.12px;font-size:15.16px;letter-spacing:-0.067px;color:#212529;-webkit-text-stroke:0.22px #212529;">Партнер</div>
<div class="t" style="left:1426.40px;top:522.08px;font-size:15.25px;letter-spacing:0.075px;color:#212529;-webkit-text-stroke:0.22px #212529;">Мітка</div>
<div class="t" style="left:1604.80px;top:522.19px;font-size:15.02px;letter-spacing:-0.185px;color:#212529;-webkit-text-stroke:0.22px #212529;">Залишкова сума</div>
<div class="t" style="left:727.40px;top:564.62px;font-size:14.56px;letter-spacing:-0.522px;color:#4e5257;">07.08.2024</div>
<div class="t" style="left:816.70px;top:564.51px;font-size:14.77px;letter-spacing:-0.337px;color:#4e5257;">PCSH1/2024/00001 ...</div>
<div class="t" style="left:970.30px;top:564.60px;font-size:14.6px;letter-spacing:-0.478px;color:#4e5257;">07.08.2024</div>
<div class="t" style="left:1121.50px;top:563.88px;font-size:15.05px;letter-spacing:-0.125px;color:#4e5257;">311002 Outstanding...</div>
<div class="t" style="left:1274.90px;top:564.52px;font-size:14.75px;letter-spacing:-0.415px;color:#4e5257;">TehnoDrons ТОВ</div>
<div class="t" style="left:1426.40px;top:564.48px;font-size:14.85px;letter-spacing:-0.257px;color:#4e5257;">Платіж клієнта 20 4...</div>
<div class="t" style="left:1643.40px;top:564.50px;font-size:14.79px;letter-spacing:-0.32px;color:#4e5257;">20 400,00 ₴</div>
<div class="t" style="left:1733.30px;top:566.42px;font-size:14.55px;letter-spacing:-0.63px;color:#62579b;-webkit-text-stroke:0.22px #62579b;">ПЕРЕГЛЯНУТИ</div>
<div class="t" style="left:726.40px;top:603.33px;font-size:14.64px;letter-spacing:-0.411px;color:#4e5257;">31.07.2024</div>
<div class="t" style="left:816.70px;top:602.69px;font-size:14.92px;letter-spacing:-0.18px;color:#4e5257;">ЗП/2024/07/0003 (S...</div>
<div class="t" style="left:1121.50px;top:602.68px;font-size:14.93px;letter-spacing:-0.175px;color:#4e5257;">641100 Розрахунки ...</div>
<div class="t" style="left:1274.90px;top:602.61px;font-size:15.09px;letter-spacing:-0.061px;color:#4e5257;">firstsite, Unitsoft info</div>
<div class="t" style="left:1426.40px;top:602.68px;font-size:14.94px;letter-spacing:-0.267px;color:#4e5257;">ПДФО</div>
<div class="t" style="left:1647.40px;top:603.25px;font-size:14.79px;letter-spacing:-0.4px;color:#4e5257;">-6 300,00 ₴</div>
<div class="t" style="left:1733.30px;top:605.17px;font-size:14.55px;letter-spacing:-0.63px;color:#62579b;-webkit-text-stroke:0.22px #62579b;">ПЕРЕГЛЯНУТИ</div>
<div class="t" style="left:726.40px;top:642.08px;font-size:14.64px;letter-spacing:-0.411px;color:#4e5257;">31.07.2024</div>
<div class="t" style="left:816.70px;top:641.44px;font-size:14.92px;letter-spacing:-0.18px;color:#4e5257;">ЗП/2024/07/0003 (S...</div>
<div class="t" style="left:1121.50px;top:641.95px;font-size:14.89px;letter-spacing:-0.225px;color:#4e5257;">642000 Розрахунки ...</div>
<div class="t" style="left:1274.90px;top:641.36px;font-size:15.09px;letter-spacing:-0.061px;color:#4e5257;">firstsite, Unitsoft info</div>
<div class="t" style="left:1426.40px;top:642.07px;font-size:14.65px;letter-spacing:-0.5px;color:#4e5257;">В3</div>
<div class="t" style="left:1659.40px;top:641.98px;font-size:14.85px;letter-spacing:-0.45px;color:#4e5257;">-525,00 ₴</div>
<div class="t" style="left:1733.30px;top:643.92px;font-size:14.55px;letter-spacing:-0.63px;color:#62579b;-webkit-text-stroke:0.22px #62579b;">ПЕРЕГЛЯНУТИ</div>
<div class="t" style="left:726.40px;top:680.83px;font-size:14.64px;letter-spacing:-0.411px;color:#4e5257;">31.07.2024</div>
<div class="t" style="left:816.70px;top:680.19px;font-size:14.92px;letter-spacing:-0.18px;color:#4e5257;">ЗП/2024/07/0003 (S...</div>
<div class="t" style="left:1121.50px;top:680.73px;font-size:14.85px;letter-spacing:-0.275px;color:#4e5257;">651000 За розрахун...</div>
<div class="t" style="left:1274.90px;top:680.11px;font-size:15.09px;letter-spacing:-0.061px;color:#4e5257;">firstsite, Unitsoft info</div>
<div class="t" style="left:1426.40px;top:681.06px;font-size:14.17px;letter-spacing:-1.0px;color:#4e5257;">ЄСВ</div>
<div class="t" style="left:1647.40px;top:680.75px;font-size:14.79px;letter-spacing:-0.4px;color:#4e5257;">-7 700,00 ₴</div>
<div class="t" style="left:1733.30px;top:682.67px;font-size:14.55px;letter-spacing:-0.63px;color:#62579b;-webkit-text-stroke:0.22px #62579b;">ПЕРЕГЛЯНУТИ</div>
<div class="t" style="left:726.40px;top:719.58px;font-size:14.64px;letter-spacing:-0.411px;color:#4e5257;">31.07.2024</div>
<div class="t" style="left:816.70px;top:718.94px;font-size:14.92px;letter-spacing:-0.18px;color:#4e5257;">ЗП/2024/07/0003 (S...</div>
<div class="t" style="left:1121.50px;top:719.45px;font-size:14.89px;letter-spacing:-0.225px;color:#4e5257;">661000 Розрахунки ...</div>
<div class="t" style="left:1274.90px;top:718.86px;font-size:15.09px;letter-spacing:-0.061px;color:#4e5257;">firstsite, Unitsoft info</div>
<div class="t" style="left:1426.40px;top:719.52px;font-size:14.76px;letter-spacing:-0.362px;color:#4e5257;">Чиста зарплата</div>
<div class="t" style="left:1639.40px;top:719.49px;font-size:14.82px;letter-spacing:-0.373px;color:#4e5257;">-28 175,00 ₴</div>
<div class="t" style="left:1733.30px;top:721.42px;font-size:14.55px;letter-spacing:-0.63px;color:#62579b;-webkit-text-stroke:0.22px #62579b;">ПЕРЕГЛЯНУТИ</div>
<div class="t" style="left:54.40px;top:8.91px;font-size:10.38px;letter-spacing:-0.588px;color:#ffffff;font-weight:700;">Custom by</div>
<div class="t" style="left:44.80px;top:21.18px;font-size:13.44px;letter-spacing:-1.4px;color:#ffffff;font-weight:700;">UNITSOFT</div>
</body></html>
